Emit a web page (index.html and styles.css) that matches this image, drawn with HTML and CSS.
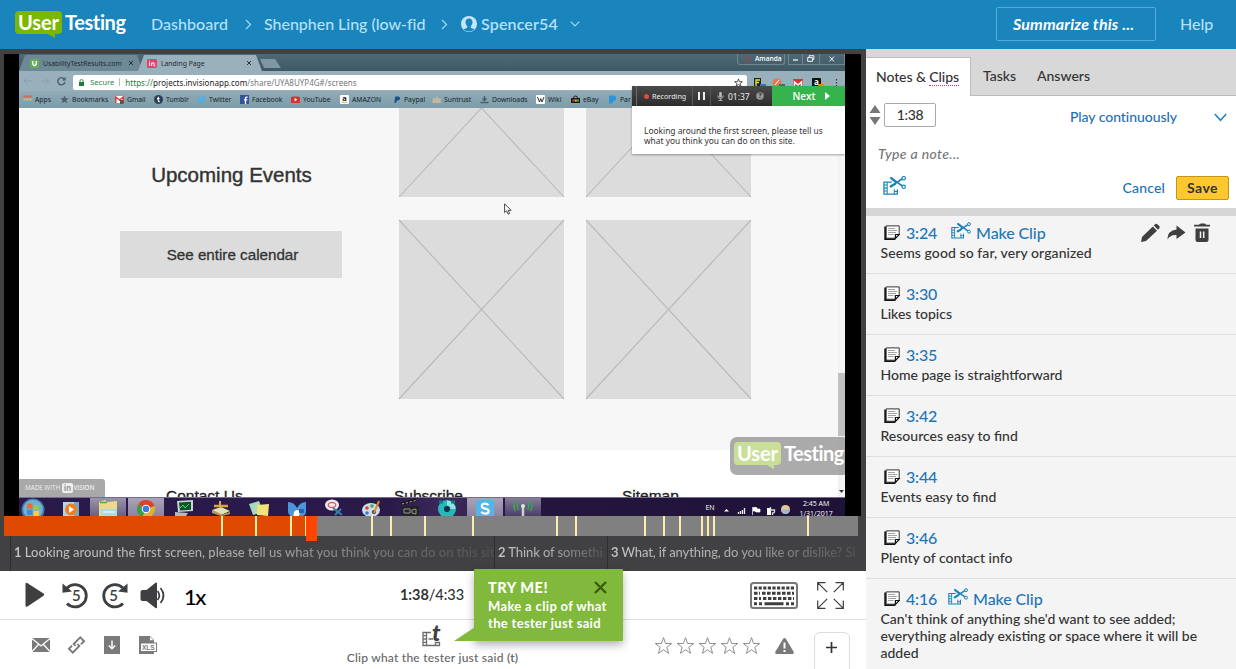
FILE: index.html
```html
<!DOCTYPE html>
<html lang="en">
<head>
<meta charset="utf-8">
<title>UserTesting</title>
<link rel="stylesheet" href="styles.css">
</head>
<body>
<svg class="defs" width="0" height="0">
  <symbol id="note" viewBox="0 0 16 15">
    <path d="M1.200 1.500V14h10" fill="none" stroke="#111" stroke-width="1.800"/>
    <path d="M2.200.9h13v8.700l-3.600 3.600H2.200z" fill="#fff" stroke="#333" stroke-width="1"/>
    <path d="M4 3.500h7M4 5.500h9M4 7.500h8M4 9.500h5.500" stroke="#999" stroke-width=".9"/>
    <path d="M15.200 9.500h-3.800v3.900z" fill="#fff" stroke="#111" stroke-width="1.200"/>
  </symbol>
  <symbol id="clip" viewBox="0 0 22 18">
    <g fill="none" stroke="#1b83bc">
      <path d="M8.500 5.700H.9v11.500h12.800v-4.700" stroke-width="1.200"/>
      <path d="M4 5.700v11.500M.9 8.600H4M.9 11.500H4M.9 14.300H4M10.800 12.500v4.700M10.800 14.700h2.900" stroke-width="1"/>
      <path d="M7 1.200l11.500 8.300M6.500 10.600l12-8" stroke-width="1.600"/>
      <path d="M7.500 1.600l5.500 4.600M7 10.200l5-3" stroke-width="2.200"/>
      <circle cx="19.800" cy="2" r="1.600" stroke-width="1.100"/><circle cx="19.800" cy="10.300" r="1.600" stroke-width="1.100"/>
    </g>
  </symbol>
  <symbol id="star" viewBox="0 0 20 19">
    <path d="M10 1.200l2.200 6.200h6.500l-5.200 4 1.900 6.400L10 14l-5.400 3.800 1.900-6.400-5.200-4h6.500z" fill="#fff" stroke="#8a8a8a" stroke-width="1"/>
  </symbol>
  <symbol id="x" viewBox="0 0 6 6"><path d="M1 1l4 4M5 1L1 5" stroke="#26363d" stroke-width="1" fill="none"/></symbol>
</svg>

<header class="top">
  <div class="logo"><span class="logo-user">User</span><span class="logo-testing">Testing</span></div>
  <nav class="crumbs">
    <span class="c1">Dashboard</span>
    <svg class="gt" width="7" height="11" viewBox="0 0 7 11"><path d="M1 1l4.500 4.500L1 10"/></svg>
    <span class="c2">Shenphen Ling (low-fid</span>
    <svg class="gt gt2" width="7" height="11" viewBox="0 0 7 11"><path d="M1 1l4.500 4.500L1 10"/></svg>
    <svg class="avatar" width="16" height="16" viewBox="0 0 16 16"><circle cx="8" cy="8" r="8" fill="#c3e7fb"/><path d="M8 2.400c-2.400 0-3.700 1.700-3.500 4 .2 2 1 3 1.700 3.700v1.600c-1 .8-2.600.9-3.600 1.900 3 2.600 7.800 2.600 10.800 0-1-1-2.600-1.100-3.600-1.900v-1.600c.7-.7 1.500-1.700 1.700-3.700.2-2.300-1.100-4-3.500-4z" fill="#1a84bd"/></svg>
    <span class="c3">Spencer54</span>
    <svg class="gt" width="10" height="6" viewBox="0 0 10 6"><path d="M.7.7L5 5 9.300.7"/></svg>
  </nav>
  <div class="summarize">Summarize this ...</div>
  <span class="help">Help</span>
</header>

<main class="main">
  <section class="left">
    <div class="stage">
      <div class="video">
        <div class="tabstrip">
          <div class="btab"><svg width="9" height="9" viewBox="0 0 9 9"><rect width="9" height="9" rx="1.500" fill="#66ad58"/><path d="M2.800 2v2.700q0 1.800 1.700 1.800t1.700-1.800V2" fill="none" stroke="#fff" stroke-width="1.300"/></svg><span>UsabilityTestResults.com</span><svg class="bx" width="6" height="6"><use href="#x"/></svg></div>
          <div class="btab on"><svg width="10" height="9" viewBox="0 0 10 9"><rect width="10" height="9" rx="1" fill="#e63f71"/><path d="M2.500 3.500v3.500M2.500 1.600v1M4.700 7V3.500M4.700 4.800Q7.200 2.500 7.200 5v2h1" fill="none" stroke="#fff"/></svg><span>Landing Page</span><svg class="bx bx2" width="6" height="6"><use href="#x"/></svg></div>
          <div class="newtab"></div>
          <div class="amanda"><svg width="8" height="7" viewBox="0 0 8 7"><path d="M2.500.5q-2 3 .5 6M5.500.5q2 3-.5 6M3.500 2l1.500 1" fill="none" stroke="#a84345"/></svg>Amanda</div>
          <div class="winbtns">
            <svg width="13" height="10" viewBox="0 0 13 10"><path d="M4 6h5" stroke="#fff" stroke-width="1.200"/></svg>
            <svg width="17" height="10" viewBox="0 0 17 10"><path d="M6.500 3V1.500h5v4H10M5 3.500h5v4H5z" fill="none" stroke="#fff"/></svg>
            <svg width="25" height="10" viewBox="0 0 25 10"><path d="M10 2.500l4.500 5M14.500 2.500L10 7.500" stroke="#fff"/></svg>
          </div>
        </div>
        <div class="toolbar">
          <svg class="navs" width="49" height="12" viewBox="0 0 49 12"><g fill="none" stroke="#85a0ab"><path d="M13 6H5m3.500-3.500L5 6l3.500 3.500M22 6h7.500m-3.500-3.500L29.500 6 26 9.500"/><path d="M45.300 4A3.600 3.600 0 1 0 46 7" stroke="#48616b" stroke-width="1.400"/></g><path d="M46.600 1.800v3.700h-3.700z" fill="#48616b"/></svg>
          <div class="url">
            <svg width="5" height="7" viewBox="0 0 5 7"><path d="M0 3h5v4H0z" fill="#1b7f3c"/><path d="M1 3V1.800q0-1.200 1.500-1.200T4 1.800V3" fill="none" stroke="#1b7f3c" stroke-width=".9"/></svg>
            <span class="secure">Secure</span><i></i><span class="addr"><b>https://</b><em>projects.invisionapp.com</em>/share/UYA8UYP4G#/screens</span>
            <svg class="fav" width="9" height="9" viewBox="0 0 20 19"><path d="M10 1.500l2.200 6.200h6.500l-5.200 4 1.900 6L10 14l-5.400 3.700 1.900-6-5.200-4h6.500z" fill="none" stroke="#333" stroke-width="1.800"/></svg>
          </div>
          <svg class="exts" width="90" height="11" viewBox="0 0 90 11">
            <rect x="7" y="1" width="7" height="9" fill="#222"/><path d="M9 9V3h4M9 5.500h3" stroke="#dce64a" fill="none" stroke-width="1.400"/><rect x="13" y="7" width="6" height="3" fill="#3577ba"/>
            <circle cx="30" cy="6" r="4.500" fill="#e5774a"/><path d="M28 8l4-5" stroke="#fff"/><rect x="32" y="7" width="6" height="3" fill="#59656c"/>
            <rect x="46" y="2" width="10" height="8" fill="#d63434"/><path d="M47.500 10V5l3.500 3 3.500-3v5" fill="none" stroke="#fff" stroke-width="1.600"/>
            <rect x="65" y="1" width="9" height="9" rx="1" fill="#111"/><text x="67" y="7.500" class="t8w">a</text><rect x="71" y="7" width="6" height="3" fill="#e88b20"/>
            <path d="M89.500 2v1.500M89.500 5v1.500M89.500 8v1.500" stroke="#33454d" stroke-width="1.300"/>
          </svg>
        </div>
        <div class="bookmarks">
          <span><svg viewBox="0 0 9 9"><path d="M.5 1.500H8.500" stroke="#e2574b" stroke-width="2" stroke-dasharray="2 1"/><path d="M.5 4.500h8" stroke="#e3c052" stroke-width="2" stroke-dasharray="2 1"/><path d="M.5 7.500h8" stroke="#63b0c6" stroke-width="2" stroke-dasharray="2 1"/></svg>Apps</span>
          <span><svg viewBox="0 0 9 9"><path d="M4.500.5l1.200 2.800h3L6.300 5.200 7.200 8.300 4.500 6.500 1.800 8.300l.9-3.100L.3 3.300h3z" fill="#4b5f68"/></svg>Bookmarks</span>
          <span><svg viewBox="0 0 9 9"><rect y="1" width="9" height="7" fill="#fff"/><path d="M.8 8V2l3.700 3L8.200 2v6" fill="none" stroke="#d5413c" stroke-width="1.500"/><rect x="5" y="5" width="3.500" height="4" fill="#555"/></svg>Gmail</span>
          <span><svg viewBox="0 0 9 9"><circle cx="4.500" cy="4.500" r="4.500" fill="#2a4057"/><path d="M4.300 1.800v4q0 1 1.500.8M3 3.600h2.600" fill="none" stroke="#fff" stroke-width="1.100"/></svg>Tumblr</span>
          <span><svg viewBox="0 0 9 9"><path d="M.5 1.500Q2.500 3.500 4.500 3.200 4.500 1 6.300 1q1 0 1.500.6l1-.2-.7 1.300Q8 7.800 3.200 8 1.500 8 .3 7.300q1.500 0 2.200-.8Q1.300 6 1 5 .2 4 .5 1.500z" fill="#4fb0e4"/></svg>Twitter</span>
          <span><svg viewBox="0 0 9 9"><rect width="9" height="9" fill="#34539a"/><path d="M5.500 9V3.200q0-1.200 2-1.200M4 4.800h3.300" fill="none" stroke="#fff" stroke-width="1.300"/></svg>Facebook</span>
          <span><svg viewBox="0 0 9 9"><rect y="1.500" width="9" height="6.500" rx="1.500" fill="#d8302c"/><path d="M3.600 3v3.400l2.800-1.700z" fill="#fff"/></svg>YouTube</span>
          <span><svg viewBox="0 0 9 9"><rect width="9" height="9" rx="1" fill="#fff"/><text x="2.300" y="6.200" class="t7">a</text><path d="M1.500 7q3 1.500 6 0" fill="none" stroke="#e8961d" stroke-width=".8"/></svg>AMAZON</span>
          <span><svg class="pp" viewBox="0 0 9 9"><path d="M2.500 1H6q2.500.5 1.800 2.800Q7 5.800 4.300 5.600L3.800 8.200H1.500z" fill="#16508f"/></svg>Paypal</span>
          <span><svg viewBox="0 0 9 9"><path d="M0 6l2-4 1.500 2L5 1l1.500 2.500L8.500 3 9 8H1z" fill="#c4b7a0"/></svg>Suntrust</span>
          <span><svg viewBox="0 0 9 9"><path d="M4.500 1v4M2.500 3.500l2 2 2-2M.5 7.500h8" fill="none" stroke="#4b5f68" stroke-width="1.400"/></svg>Downloads</span>
          <span><svg viewBox="0 0 9 9"><rect width="9" height="9" rx="1" fill="#fff"/><path d="M1.500 2l2 5 1.200-3.500L6 7l2-5" fill="none" stroke="#222" stroke-width=".9"/></svg>Wiki</span>
          <span><svg viewBox="0 0 9 9"><path d="M0 3h9v5H0z" fill="#1c1c1c"/><path d="M2.500 3q0-2 2-2t2 2" fill="none" stroke="#1c1c1c"/><path d="M1.500 4.500h2v2h-2z" fill="#d83b2f"/><path d="M3.800 4.500h2v2h-2z" fill="#e4c832"/><path d="M6 4.500h2v2H6z" fill="#4aa440"/></svg>eBay</span>
          <span><svg viewBox="0 0 9 9"><path d="M1 .5h5Q8.500 1 8 4 7 6.500 4.500 6.500v2H1z" fill="#2a94dc"/></svg>Par</span>
        </div>
        <div class="page">
          <div class="pagebody">
            <div class="pcol">
              <h2>Upcoming Events</h2>
              <div class="calbtn">See entire calendar</div>
            </div>
            <div class="gallery">
              <svg class="ph" viewBox="0 0 165 178" preserveAspectRatio="none"><path d="M0 0l165 178M165 0L0 178"/></svg>
              <svg class="ph" viewBox="0 0 165 178" preserveAspectRatio="none"><path d="M0 0l165 178M165 0L0 178"/></svg>
              <svg class="ph" viewBox="0 0 165 178" preserveAspectRatio="none"><path d="M0 0l165 178M165 0L0 178"/></svg>
              <svg class="ph" viewBox="0 0 165 178" preserveAspectRatio="none"><path d="M0 0l165 178M165 0L0 178"/></svg>
            </div>
          </div>
          <div class="pagefoot"><span>Contact Us</span><span>Subscribe</span><span>Sitemap</span></div>
          <div class="madewith">MADE WITH <b>in</b><em>VISION</em></div>
          <div class="scroll"><div class="thumb"></div><svg width="5" height="3" viewBox="0 0 5 3"><path d="M0 0h5L2.500 3z" fill="#333"/></svg></div>
          <svg class="cursor" width="8" height="12" viewBox="0 0 8 12"><path d="M.6.8v8.700l2-1.700 1.500 3.400 1.500-.7-1.400-3.200h2.900z" fill="#fff" stroke="#333" stroke-width=".9"/></svg>
        </div>
        <div class="taskbar">
          <div><svg viewBox="0 0 24 18"><circle cx="12" cy="12" r="11.500" fill="#3d7ba8"/><circle cx="12" cy="11.500" r="9.800" fill="#6fb1d4"/><path d="M6 6q3-1.500 5.500 0v5q-3-1-5.500 0z" fill="#ea6b35"/><path d="M12.500 6.500q3 1 5.500 0v5q-3 1-5.500 0z" fill="#97ca4c"/><path d="M6 12q3-1 5.500 0v5H6z" fill="#3d8dd8"/><path d="M12.500 12.500q3 1 5.500 0V18h-5.500z" fill="#f6cf40"/></svg></div>
          <div><svg viewBox="0 0 24 18"><rect x="4" y="4" width="16" height="14" fill="#7ba6c2"/><rect x="4" y="4" width="11" height="14" fill="#b4d5e7"/><circle cx="12" cy="11.500" r="6" fill="#f08122"/><path d="M10 8v7l5-3.500z" fill="#fff"/></svg></div>
          <div class="act"><svg viewBox="0 0 24 18"><path d="M3 4l6-2 2 2 10-1v15H3z" fill="#ecd98a"/><path d="M4 4.500h7" stroke="#3fae53" stroke-width="1.500"/><path d="M5 11h16v8H5z" fill="#a7dbe8"/><path d="M7 14h12" stroke="#fff"/></svg></div>
          <div class="act2"><svg viewBox="0 0 24 18"><circle cx="12" cy="11" r="9" fill="#ddb52a"/><path d="M12 11L4.200 6.500A9 9 0 0 1 20.500 8z" fill="#d8432f"/><path d="M12 11L4.200 6.500a9 9 0 0 0 4 12.700z" fill="#3b9c4c"/><circle cx="12" cy="11" r="4.300" fill="#fff"/><circle cx="12" cy="11" r="3.300" fill="#3f7be0"/></svg></div>
          <div><svg viewBox="0 0 24 18"><path d="M5 3l16-1v11L6 14z" fill="#ccd3cf"/><path d="M7 4.500l12-.7v8L8 12.500z" fill="#0b532d"/><path d="M8 10l3-3 2 3 4-4" stroke="#4ccf69" fill="none"/><path d="M3 14l13 1-2 3H3z" fill="#b3bdc0"/></svg></div>
          <div><svg viewBox="0 0 24 18"><path d="M3 12l9-3 9 4-9 4z" fill="#e5dfb6"/><path d="M3 12v3l9 3v-2M12 17l9-3v2l-8 2" fill="#b39a5b"/><path d="M5 8h14" stroke="#d9a82c" stroke-width="2.500"/><path d="M11 8V3" stroke="#cfae5e" stroke-width="2"/></svg></div>
          <div><svg viewBox="0 0 24 18"><path d="M2 6l10-3 4 11-10 3z" fill="#a9d7c0"/><path d="M10 7l12-1-1 12-11-1z" fill="#f2e27c"/></svg></div>
          <div><svg viewBox="0 0 24 18"><path d="M3 4q6 0 9 6 3-6 9-6v9q0 4-3 5H6q-3-1-3-5z" fill="#4b95dc"/><path d="M8.500 18q0-6 3.500-6 2 0 3 2l-1 4z" fill="#fff"/><path d="M14 11h5v4h-5z" fill="#2c63a8"/></svg></div>
          <div><svg viewBox="0 0 24 18"><ellipse cx="10" cy="7" rx="7" ry="5.500" fill="#f2e9ea"/><ellipse cx="10" cy="7" rx="4" ry="2.500" fill="none" stroke="#c73644"/><path d="M11 10l9 7M13 17l6-6" stroke="#377fa8" stroke-width="2"/></svg></div>
          <div><svg viewBox="0 0 24 18"><ellipse cx="11" cy="12" rx="9" ry="7" fill="#cbdde7"/><circle cx="7" cy="10" r="1.800" fill="#d8453c"/><circle cx="12" cy="8" r="1.800" fill="#4aa450"/><circle cx="7" cy="15" r="1.800" fill="#3f73ce"/><circle cx="14" cy="14" r="2" fill="#3b1f55"/><path d="M14 15l5-12" stroke="#d88b35" stroke-width="2"/></svg></div>
          <div><svg viewBox="0 0 24 18"><path d="M4 8h17v10H4z" fill="#242226"/><path d="M3 6l15-4" stroke="#19171b" stroke-width="3"/><path d="M4 6l14-3.500" stroke="#bbb" stroke-dasharray="2 2"/><path d="M6 11h6v4H6zM14 12l4-1v5l-4-1z" fill="none" stroke="#8f9a8c"/></svg></div>
          <div><svg viewBox="0 0 24 18"><circle cx="12" cy="11" r="6" fill="#18304f" stroke="#27b8b9" stroke-width="6"/><path d="M12 5a6 6 0 0 1 6 6" stroke="#8fe3e0" stroke-width="5" fill="none"/><path d="M4 4h4M16 4h4" stroke="#127b87" stroke-width="3"/></svg></div>
          <div class="act2"><svg viewBox="0 0 24 18"><rect x="3" y="2" width="18" height="18" rx="3" fill="#52b7e6"/><path d="M15.500 7.200q-1-1.600-3.500-1.600-3.200 0-3.200 2.500 0 2 3.400 2.600 3.500.6 3.500 2.500 0 2.400-3.600 2.400-2.700 0-3.700-1.800" fill="none" stroke="#fff" stroke-width="2.200"/></svg></div>
          <div class="act dim"><svg viewBox="0 0 24 18"><path d="M12 8v10" stroke="#ccd2d0" stroke-width="2.500"/><circle cx="12" cy="8" r="2" fill="#dfe6e2"/><path d="M7.500 4q-2.500 4 0 8M16.500 4q2.500 4 0 8M4.500 3q-3 5 0 10M19.500 3q3 5 0 10" fill="none" stroke="#3da254" stroke-width="1.500"/></svg></div>
          <div class="tray">
            <span>EN</span>
            <svg width="62" height="14" viewBox="6 0 62 14"><path d="M11 8.500h5L13.500 6z" fill="#fff"/><path d="M25.500 11V9M27.500 11V8M29.500 11V7M31.500 11V5" stroke="#eee" stroke-width="1.300"/><path d="M39.500 4v8M40 4.500h3.500l1 1.500H47v3h-4L42 8h-2" stroke="#fff" fill="#fff" stroke-width=".7"/><path d="M54 5h4v7h-4z" fill="#fff"/><path d="M57.500 4v3h4v2q0 1-2 1v2" stroke="#ddd" fill="none" stroke-width="1.300"/></svg>
            <svg width="9" height="9" viewBox="0 0 9 9"><circle cx="4.500" cy="4.500" r="4.500" fill="#e9c494"/><path d="M0 4.500a4.500 4.500 0 0 0 9 0z" fill="#9bb7d8"/></svg>
            <div class="clock">2:45 AM<br>1/31/2017</div>
          </div>
        </div>
        <div class="rec">
          <div class="recbar">
            <span class="grip"></span>
            <span class="recording"><i></i>Recording</span>
            <span class="pause"><i></i><i></i></span>
            <span class="rtime"><svg width="7" height="9" viewBox="0 0 7 9"><rect x="2.200" width="2.600" height="5.500" rx="1.300" fill="#bbb"/><path d="M.7 3.500q0 3 2.800 3t2.800-3M3.500 6.500V8M1.500 8.400h4" fill="none" stroke="#bbb" stroke-width=".9"/></svg>01:37<svg width="8" height="8" viewBox="0 0 8 8"><circle cx="4" cy="4" r="3.800" fill="#999"/><text x="2.500" y="6.300" class="q">?</text></svg></span>
            <span class="next">Next <svg width="5" height="8" viewBox="0 0 5 8"><path d="M0 0l5 4-5 4z" fill="#fff"/></svg></span>
          </div>
          <p>Looking around the first screen, please tell us<br>what you think you can do on this site.</p>
        </div>
        <div class="wm"><div class="logo"><span class="logo-user">User</span><span class="logo-testing">Testing</span></div></div>
      </div>
    </div>
    <div class="timeline">
      <div class="played"></div>
      <i class="mark" style="left:217px"></i><i class="mark" style="left:251px"></i><i class="mark" style="left:286px"></i><i class="mark" style="left:301px"></i>
      <i class="mark" style="left:367px"></i><i class="mark" style="left:386px"></i><i class="mark" style="left:420px"></i><i class="mark" style="left:468px"></i><i class="mark" style="left:552px"></i><i class="mark" style="left:571px"></i><i class="mark" style="left:640px"></i><i class="mark" style="left:659px"></i><i class="mark" style="left:675px"></i><i class="mark" style="left:697px"></i><i class="mark" style="left:703px"></i><i class="mark" style="left:709px"></i><i class="mark" style="left:803px"></i>
      <div class="handle"></div>
    </div>
    <div class="tasks">
      <div class="task t1"><b>1</b> Looking around the first screen, please tell us what you think you can do on this sit</div>
      <div class="task t2"><b>2</b> Think of somethi</div>
      <div class="task t3"><b>3</b> What, if anything, do you like or dislike? Si</div>
    </div>
    <div class="controls">
      <svg class="c-play" width="20" height="26" viewBox="0 0 20 26"><path d="M.5 2.200Q.5 0 2.500 1.200l16 10.300q1.500 1.200 0 2.300l-16 10.700q-2 1-2-1z" fill="#3f3f41"/></svg>
      <svg class="c-back" width="27" height="27" viewBox="0 0 27 27"><path d="M5 6A11.200 11.200 0 1 1 5 21.500" fill="none" stroke="#3f3f41" stroke-width="2.800"/><path d="M.5 1.500v9.300l9.500-1.300z" fill="#3f3f41"/><text x="10" y="18.500" class="five">5</text></svg>
      <svg class="c-fwd" width="27" height="27" viewBox="0 0 27 27"><path d="M22 6A11.200 11.200 0 1 0 22 21.500" fill="none" stroke="#3f3f41" stroke-width="2.800"/><path d="M26.500 1.500v9.300l-9.500-1.300z" fill="#3f3f41"/><text x="8.300" y="18.500" class="five">5</text></svg>
      <svg class="c-vol" width="26" height="27" viewBox="0 0 26 27"><path d="M2.500 8h4l9-7.200q1.500-.8 1.500 1v23.500q0 1.500-1.500.7L6.500 19h-4Q.5 19 .5 17v-7q0-2 2-2z" fill="#3f3f41"/><path d="M17.500 9q3.600 4.500 0 9M20.500 6q6 7.500 0 15" fill="none" stroke="#3f3f41" stroke-width="1.700"/></svg>
      <span class="speed">1x</span>
      <span class="time"><b>1:38</b>/4:33</span>
      <svg class="kbd" width="48" height="27" viewBox="0 0 48 27"><rect x="1" y="1" width="46" height="25" rx="2.500" fill="#fff" stroke="#777" stroke-width="2"/><g stroke="#3f3f41" stroke-width="3" fill="none"><path d="M4 6h40" stroke-dasharray="3.200 1.400"/><path d="M4 11.300h6M12 11.300h32" stroke-dasharray="3.600 1.400"/><path d="M4 16.500h7M13 16.500h31" stroke-dasharray="3.400 1.600"/><path d="M4 21.700h9" stroke-dasharray="3 2"/><path d="M14.500 21.700h19M36 21.700h3M41 21.700h3"/></g></svg>
      <svg class="full" width="27" height="27" viewBox="0 0 27 27"><path d="M.7 8.500V.7h7.800M.7.7l9.500 9.500M18.500.7h7.800v7.800M26.300.7l-9.500 9.500M.7 18.500v7.800h7.800M.7 26.300l9.500-9.500M18.500 26.300h7.800v-7.800M26.300 26.300l-9.500-9.500" fill="none" stroke="#3f3f41" stroke-width="1.200"/></svg>
    </div>
    <div class="foot">
      <div class="tools">
        <svg width="18" height="14" viewBox="0 0 18 14"><rect width="18" height="14" fill="#7a7a7a"/><path d="M0 .5l9 7.500 9-7.500M0 13.500L6.500 6.500M18 13.500L11.500 6.500" fill="none" stroke="#fff" stroke-width="1.300"/></svg>
        <svg width="17" height="18" viewBox="0 0 17 18"><g fill="none" stroke="#7a7a7a" stroke-width="1.900" transform="rotate(-45 8.500 9)"><path d="M7.200 9V6.300h9.300v5.400H12"/><path d="M9.800 9v2.700H.5V6.300H5"/></g></svg>
        <svg width="16" height="18" viewBox="0 0 16 18"><rect width="16" height="18" fill="#7a7a7a"/><path d="M8 4.500v8M4.800 9.500L8 12.700l3.200-3.200" fill="none" stroke="#fff" stroke-width="1.500"/></svg>
        <svg width="18" height="18" viewBox="0 0 18 18"><path d="M0 0h11l4 4v14H0z" fill="#7a7a7a"/><path d="M11 .8V4.200h3.500z" fill="#fff"/><rect x="1.500" y="7" width="16" height="8.500" fill="#fff" stroke="#7a7a7a"/><text x="3" y="13.800" class="xls">XLS</text></svg>
      </div>
      <div class="clipwhat">
        <svg width="20" height="21" viewBox="0 0 20 21"><path d="M9 6.500H1v13h16.500v-3H13.500v3M4.500 6.500v13M1 9.700h3.500M1 13h3.500M1 16.300h3.500M6.500 13H11" fill="none" stroke="#6d6d6d" stroke-width="1.300"/><text x="10" y="14.500" class="tt">t</text></svg>
        <span>Clip what the tester just said <b>(t)</b></span>
      </div>
      <div class="stars"><svg><use href="#star"/></svg><svg><use href="#star"/></svg><svg><use href="#star"/></svg><svg><use href="#star"/></svg><svg><use href="#star"/></svg></div>
      <svg class="warn" width="19" height="16" viewBox="0 0 19 16"><path d="M8 1q1.500-2 3 0l7.500 12.500q1 2-1 2.500h-16q-2-.5-1-2.500z" fill="#7a7a7a"/><path d="M9.500 4.500v6M9.500 12v2" stroke="#fff" stroke-width="2"/></svg>
      <div class="plus"><svg width="11" height="11" viewBox="0 0 11 11"><path d="M5.500 0v11M0 5.500h11" stroke="#333" stroke-width="1.700"/></svg></div>
    </div>
    <div class="tip">
      <svg class="tail" width="21" height="14" viewBox="0 0 21 14"><path d="M21 0L0 14h21z" fill="#80b93c"/></svg>
      <svg class="close" width="13" height="13" viewBox="0 0 13 13"><path d="M1 1l11 11M12 1L1 12" stroke="#3a5a10" stroke-width="2.300"/></svg>
      <b class="try">TRY ME!</b>
      <p class="l1">Make a clip of what</p><p class="l2">the tester just said</p>
    </div>
  </section>

  <aside class="side">
    <div class="tabs"><div class="tab active">Notes &amp; <span>Clips</span></div><div class="tab">Tasks</div><div class="tab ans">Answers</div></div>
    <div class="editor">
      <div class="row1">
        <svg width="12" height="20" viewBox="0 0 12 20"><path d="M6 0l5.500 8H.5zM6 20L.5 12h11z" fill="#777"/></svg>
        <div class="tbox">1:38</div>
        <span class="playc">Play continuously</span>
        <svg width="13" height="9" viewBox="0 0 13 9"><path d="M.8 1l5.700 6.300L12.200 1" fill="none" stroke="#1b83bc" stroke-width="1.500"/></svg>
      </div>
      <div class="typen">Type a note...</div>
      <div class="row3">
        <svg width="23" height="19"><use href="#clip"/></svg>
        <span class="cancel">Cancel</span><div class="save">Save</div>
      </div>
    </div>
    <ul class="notes">
      <li class="first"><div class="h"><svg width="16" height="15"><use href="#note"/></svg><span class="tm">3:24</span><svg class="ci" width="20" height="17"><use href="#clip"/></svg><span class="mk">Make Clip</span>
        <svg class="acts" width="70" height="20" viewBox="0 0 70 20"><g fill="#3f3f41"><path d="M0 19l1-5L11.800 3.500l4.200 4.200L5 18z"/><path d="M12.800 2.500l1.500-1.500q1-.7 2 .2l2 2q.8 1 0 2L17 6.700z"/><path d="M35.500 2.500l9 7-9 6.500v-4q-6.500-.5-9 4.500 0-9 9-10z"/><path d="M53 3.500V1.800h5Q58.500.5 60.500.5h2.500q2 0 2 1.300h4v1.700zM54.500 5.500h13V17q0 2-2 2h-9q-2 0-2-2z"/></g><path d="M59.500 8.500v6.500M62.700 8.500v6.500" stroke="#f4f4f4" stroke-width="1.500"/></svg></div><p>Seems good so far, very organized</p></li>
      <li><div class="h"><svg width="16" height="15"><use href="#note"/></svg><span class="tm">3:30</span></div><p>Likes topics</p></li>
      <li><div class="h"><svg width="16" height="15"><use href="#note"/></svg><span class="tm">3:35</span></div><p>Home page is straightforward</p></li>
      <li><div class="h"><svg width="16" height="15"><use href="#note"/></svg><span class="tm">3:42</span></div><p>Resources easy to find</p></li>
      <li><div class="h"><svg width="16" height="15"><use href="#note"/></svg><span class="tm">3:44</span></div><p>Events easy to find</p></li>
      <li><div class="h"><svg width="16" height="15"><use href="#note"/></svg><span class="tm">3:46</span></div><p>Plenty of contact info</p></li>
      <li class="last"><div class="h"><svg width="16" height="15"><use href="#note"/></svg><span class="tm">4:16</span><svg class="ci" width="20" height="17"><use href="#clip"/></svg><span class="mk">Make Clip</span></div><p>Can't think of anything she'd want to see added;<br>everything already existing or space where it will be<br>added</p></li>
    </ul>
  </aside>
</main>
</body>
</html>
```
FILE: styles.css
```css
* { box-sizing: border-box; margin: 0; padding: 0; }
body { width: 1236px; height: 669px; overflow: hidden; font: 500 14px Lato, "Liberation Sans", sans-serif; color: #333; background: #fff; }
svg { display: block; flex: none; overflow: visible; }
.defs { position: absolute; }
span { white-space: nowrap; }

/* header */
.top { height: 49px; background: #1a84bd; display: flex; align-items: center; padding: 0 23px 3px 15px; color: #b5e0f7; font-size: 16px; }
.logo { display: flex; align-items: center; width: 112px; height: 22px; font: 700 20px/22px Lato, sans-serif; color: #fff; }
.logo-user { width: 47px; height: 23px; background: #7ab800; border-radius: 4px; padding-left: 3px; letter-spacing: -.1px; position: relative; }
.logo-user::after { content: ""; position: absolute; left: 31px; top: 22px; border: solid transparent; border-width: 0 0 5px 9px; border-top: 5px solid #7ab800; border-left-width: 9px; }
.logo-testing { padding-left: 3px; letter-spacing: -.4px; }
.top > .logo { margin-top: -2px; }
.crumbs { display: flex; align-items: center; flex: 1; padding-left: 24px; }
.gt { fill: none; stroke: #a5d8f2; stroke-width: 1.200; margin-top: 2px; }
.c1 { width: 94px; letter-spacing: .05px; }
.c2 { width: 177px; margin-left: 12px; letter-spacing: -.03px; }
.avatar { margin: 2px 4px 0 13px; }
.c3 { font-weight: 600; width: 89px; letter-spacing: .15px; }
.summarize { width: 160px; height: 34px; border: 1px solid #57aadb; border-radius: 2px; font: italic 700 16px/31px Lato, sans-serif; letter-spacing: .18px; color: #fff; padding-left: 16px; margin-top: 2px; }
.help { width: 33px; margin-left: 24px; }

.main { display: grid; grid-template-columns: 866px 370px; height: 620px; }
.left { background: #414143; display: flex; flex-direction: column; position: relative; padding-top: 5px; }
.stage { margin: 0 5px 0 4px; height: 462px; background: #000; padding: 0 16px 0 15px; }
.video { width: 826px; height: 462px; overflow: hidden; position: relative; display: flex; flex-direction: column; font-family: "Noto Sans", sans-serif; font-weight: 400; }

/* browser inside the recording */
.tabstrip { height: 17px; background: linear-gradient(#4e6a77, #3f5863); display: flex; align-items: flex-start; }
.btab { height: 16px; width: 124px; margin-top: 1px; background: #6d8996; clip-path: polygon(6px 0, 118px 0, 124px 100%, 0 100%); display: flex; align-items: center; font-size: 6.800px; color: #1c2b31; padding-left: 11px; }
.btab span { padding-left: 4px; flex: 1; }
.btab .bx { margin-right: 9px; }
.btab.on { background: #9ab1bb; width: 124px; margin-left: -5px; padding-left: 9px; }
.btab .bx2 { margin-right: 10px; }
.newtab { width: 21px; height: 9px; background: #7e97a2; margin: 5px 0 0 -2px; clip-path: polygon(0 0, 15px 0, 21px 100%, 4px 100%); }
.amanda { margin-left: auto; width: 48px; height: 11px; border: 1px solid #70848e; border-top: 0; border-radius: 0 0 3px 3px; color: #fff; font: 600 6.600px/10px "Open Sans", sans-serif; display: flex; gap: 4px; padding-left: 5px; align-items: center; }
.winbtns { display: flex; margin-left: 3px; border: 1px solid #70848e; border-top: 0; height: 11px; }
.winbtns svg + svg { border-left: 1px solid #70848e; }
.toolbar { height: 20px; background: #98b0bb; display: flex; align-items: center; }
.navs { margin-right: 5px; }
.url { width: 674px; height: 15px; background: #fff; border-radius: 2px; display: flex; align-items: center; font-size: 8px; color: #777; padding: 0 4px 0 6px; margin-top: 2px; }
.secure { color: #1f8a47; padding-left: 6px; font-size: 7.700px; }
.url i { width: 1px; height: 8px; background: #bbb; margin: 0 5px 0 5px; }
.addr { letter-spacing: .02px; }
.addr b { font-weight: 400; color: #1f7a40; }
.addr em { font-style: normal; color: #222; }
.fav { margin-left: auto; }
.exts { margin-top: 2px; }
.t8w { font: 700 8px "Open Sans", sans-serif; fill: #fff; }
.t7 { font: 700 7.500px "Open Sans", sans-serif; fill: #111; }
.bookmarks { height: 17px; background: linear-gradient(#93abb6, #7b9ca9); display: grid; grid-template-columns: 37px 55px 39px 43px 43px 51px 49px 53px 39px 48px 56px 35px 37px 60px; padding-left: 4px; align-items: center; font-size: 6.800px; color: #14242b; }
.bookmarks span { display: flex; align-items: center; gap: 3px; }
.bookmarks svg { width: 9px; height: 9px; }
.bookmarks .pp { width: 8px; }
.page { height: 389px; background: #fff; position: relative; overflow: hidden; }
.pagebody { height: 342px; background: #f7f7f7; display: flex; padding-left: 101px; overflow: hidden; }
.pcol { width: 222px; text-align: center; font-family: "Liberation Sans", sans-serif; color: #333; }
.pcol h2 { font-size: 20.500px; font-weight: 400; line-height: 24px; padding: 55px 0 0 1px; -webkit-text-stroke: .4px #333; }
.calbtn { margin-top: 44px; height: 47px; line-height: 47px; background: #dcdcdc; font-size: 15.200px; -webkit-text-stroke: .3px #333; padding-left: 3px; }
.gallery { margin: -89px 0 0 57px; display: grid; grid-template-columns: 165px 165px; grid-template-rows: 178px 179px; gap: 23px 22px; align-content: start; }
.ph { width: 165px; height: 100%; background: #dcdcdc; stroke: #b9b9b9; stroke-width: 1.100; fill: none; }
.pagefoot { display: flex; padding: 37px 0 0 147px; font: 15.500px/18px "Liberation Sans", sans-serif; color: #222; -webkit-text-stroke: .3px #222; }
.pagefoot span { width: 228px; flex: none; }
.madewith { position: absolute; left: 0; top: 371px; width: 86px; height: 18px; background: #a9a9a9; border-top-right-radius: 3px; color: #eee; font: 6.300px/18px "Open Sans", sans-serif; padding-left: 6px; display: flex; align-items: center; white-space: pre; }
.madewith b { background: #eee; color: #999; border-radius: 2px; font-size: 8px; line-height: 10px; padding: 0 2px; }
.madewith em { font-style: normal; font-weight: 600; }
.scroll { position: absolute; right: 0; top: 0; width: 7px; height: 389px; background: linear-gradient(90deg, #f1f1f1, #f7f7f7); }
.thumb { margin-top: 265px; height: 63px; background: #c1c1c1; }
.scroll svg { margin: 54px 0 0 1px; }
.cursor { position: absolute; left: 485px; top: 95px; }
.taskbar { height: 19px; flex: none; background: linear-gradient(90deg, #2a1a4c, #2a1a4a 45%, #3c2a5c 52%, #24163f 60%, #1f1238); border-top: 1px solid #776b8e; display: flex; overflow: hidden; }
.taskbar > div { width: 37.700px; flex: none; height: 18px; display: flex; justify-content: center; }
.taskbar > div:first-child { margin-left: -5px; }
.taskbar > div > svg { width: 24px; height: 18px; }
.taskbar > .act, .taskbar > .act2 { width: 35.700px; margin: 0 1px; background: linear-gradient(#9a93ab, #6a6184); }
.taskbar > .act2 { background: linear-gradient(#aaa3b8, #8c84a0); }
.taskbar > .dim { background: linear-gradient(#857c99, #4a3e68); }
.taskbar > .tray { width: 301px; color: #fff; font: 7px/9px "Open Sans", sans-serif; align-items: flex-start; justify-content: flex-end; padding-top: 4px; }
.taskbar .tray svg { width: auto; height: auto; }
.tray > span { padding-top: 1px; margin-right: 4px; }
.tray > svg:first-of-type { margin-top: 1px; }
.tray > svg + svg { margin: 3px 0 0 0; }
.clock { width: 53px; text-align: center; margin-top: -3px; line-height: 10px; }
.rec { position: absolute; left: 613px; top: 32px; width: 213px; height: 68px; background: #fff; box-shadow: 0 1px 2px rgba(0,0,0,.35); }
.recbar { height: 20px; background: linear-gradient(#4a4a4a, #2c2c2c); display: flex; color: #eee; font-size: 7.200px; align-items: center; }
.recbar > span { display: flex; align-items: center; height: 100%; }
.recbar > .grip { width: 5px; border-right: 1px solid #6a6a6a; }
.recording { width: 56px; padding-left: 7px; gap: 3px; border-right: 1px solid #5a5a5a; }
.recording i { width: 5px; height: 5px; border-radius: 50%; background: #e04a43; }
.pause { width: 18px; gap: 3px; justify-content: center; border-right: 1px solid #555; }
.pause i { width: 2px; height: 8px; background: #eee; }
.rtime { width: 61px; padding-left: 6px; gap: 4px; font-size: 8.500px; }
.rtime svg + svg { margin-left: 2px; }
.q { font: 700 6.500px "Open Sans", sans-serif; fill: #333; }
.next { width: 73px; background: #35b44e; justify-content: center; gap: 9px; font: 600 10px "Open Sans", sans-serif; color: #fff; padding-left: 5px; }
.rec p { padding: 20px 0 0 12px; font-size: 8.400px; line-height: 9.800px; color: #333; white-space: nowrap; }
.wm { position: absolute; left: 711px; top: 383px; width: 120px; height: 38px; border-radius: 7px; background: rgba(150,150,150,.8); padding: 5px 0 0 4px; }
.wm .logo-user { background: #c9df98; }
.wm .logo-user::after { border-top-color: #c9df98; }
.wm .logo-testing { letter-spacing: -.5px; }

/* timeline */
.timeline { position: relative; height: 20px; width: 854px; margin-left: 4px; background: #808080; }
.played { width: 303px; height: 20px; background: #e04a00; }
.mark { position: absolute; top: 0; width: 2px; height: 20px; background: #fbedae; }
.handle { position: absolute; left: 302px; top: 0; width: 11px; height: 25px; background: #ff4500; }
.tasks { height: 35px; display: grid; grid-template-columns: 484px 113px 253px; margin-left: 10px; }
.task { border-left: 1px solid #2e2e30; padding: 9px 0 0 3px; font: 500 13px/15px Lato, sans-serif; white-space: nowrap; overflow: hidden; color: transparent; background: linear-gradient(90deg, #c4c4c4, #aaa 50%, #626264 88%, #525254) text; -webkit-background-clip: text; }
.t1 { letter-spacing: 0; }
.t2 { letter-spacing: -.1px; }
.t3 { letter-spacing: -.12px; }

/* controls */
.controls { height: 49px; background: #fff; border-bottom: 1px solid #ddd; display: flex; align-items: center; padding: 0 22px 0 25px; }
.c-back { margin-left: 17px; }
.c-fwd { margin-left: 12px; }
.c-vol { margin-left: 12px; }
.speed { font-size: 22px; color: #000; margin: 3px 0 0 18px; letter-spacing: -1.500px; width: 216px; font-weight: 500; }
.time { font-size: 14.500px; letter-spacing: -.05px; color: #333; flex: 1; margin-top: -1px; }
.kbd { margin-right: 19px; }
.five { font: 600 15px Lato, sans-serif; fill: #3f3f41; }
.foot { height: 49px; background: #fff; display: flex; padding-left: 32px; }
.tools { display: flex; align-items: center; gap: 19px; width: 314px; }
.tools svg:nth-child(2) { margin-left: -1px; }
.clipwhat { display: flex; flex-direction: column; align-items: center; width: 173px; padding-top: 6px; color: #666; font-size: 12px; line-height: 14px; letter-spacing: .23px; }
.clipwhat svg { margin: 0 1px 4px 0; }
.clipwhat b { font-weight: 600; }
.tt { font: italic 900 23px Lato, sans-serif; fill: #3f3f41; }
.stars { display: flex; gap: 3px; margin: 16px 0 0 135px; }
.stars svg { width: 19px; height: 19px; }
.warn { margin: 18px 0 0 14px; }
.plus { width: 36px; height: 40px; border: 1px solid #ddd; border-radius: 6px 6px 0 0; margin: 12px 0 0 20px; padding: 9px 0 0 11px; }
.xls { font: 700 6.500px "Liberation Sans", sans-serif; fill: #7a7a7a; }
.tip { position: absolute; left: 474px; top: 520px; width: 149px; height: 72px; background: #80b93c; box-shadow: 0 4px 8px rgba(0,0,0,.3); color: #fff; padding: 11px 0 0 14px; font: 700 13px/17px Lato, sans-serif; border-radius: 1px; white-space: nowrap; }
.tip .tail { position: absolute; left: -20px; top: 58px; }
.tip .close { position: absolute; left: 120px; top: 12px; }
.try { display: block; font: 900 14.500px/16px Lato, sans-serif; letter-spacing: .55px; margin-bottom: 2px; }
.l1 { letter-spacing: .34px; }
.l2 { letter-spacing: .32px; }

/* notes */
.side { background: #f4f4f4; overflow: hidden; }
.tabs { height: 47px; background: #d8d8d8; border-bottom: 1px solid #bbb; display: flex; align-items: flex-end; font-size: 14px; }
.tab { height: 39px; line-height: 40px; padding-left: 12px; width: 56px; }
.tab.active { width: 105px; height: 39px; line-height: 37px; background: #fff; border: 1px solid #bbb; border-width: 1px 1px 0 0; padding-left: 10px; margin-bottom: -1px; letter-spacing: -.08px; }
.tab.active span { border-bottom: 1px dotted #1b83bc; }
.tab.ans { padding-left: 10px; }
.editor { background: #fff; height: 120px; border-bottom: 8px solid #d6d6d6; padding: 7px 14px 0 3px; }
.row1 { display: flex; align-items: center; height: 24px; color: #1f6fb2; }
.row1 svg:last-child { margin: 5px -5px 0 37px; }
.tbox { width: 52px; height: 24px; margin-left: 3px; border: 1px solid #aaa; border-radius: 2px; color: #333; text-align: center; line-height: 21px; font-size: 14px; letter-spacing: -.3px; }
.playc { margin: 2px 0 0 auto; letter-spacing: -.05px; }
.typen { font-style: italic; color: #777; margin: 18px 0 0 9px; line-height: 17px; letter-spacing: .36px; }
.row3 { display: flex; align-items: center; height: 24px; margin: 14px -7px 0 0; padding: 0 7px 0 14px; }
.row3 svg { margin-top: -6px; }
.cancel { margin: -1px 0 0 auto; color: #1f6fb2; letter-spacing: .15px; }
.save { width: 53px; height: 24px; margin: 0 -7px 0 11px; border: 1px solid #c29618; border-radius: 2px; background: #fdc82f; font: 700 14px/22px Lato, sans-serif; letter-spacing: .4px; text-align: center; }
.notes { list-style: none; }
.notes li { height: 61px; border-bottom: 1px solid #dedede; padding: 9px 0 0 14.500px; }
.notes .first { height: 58px; padding-top: 6px; }
.notes .last { border: 0; height: auto; }
.h { display: flex; align-items: center; height: 20px; font-size: 16px; color: #1f76b8; padding-left: 3.500px; }
.h > svg:first-child { margin-top: 1px; }
.tm { margin-left: 6px; letter-spacing: -.2px; }
.ci { margin: -3px 0 0 14px; }
.last .ci { margin-left: 11px; }
.mk { margin-left: 5px; letter-spacing: -.1px; }
.acts { margin: 2px 0 0 95px; }
.notes p { line-height: 17px; margin-top: 2px; white-space: nowrap; }
.first p { letter-spacing: .08px; }
```
